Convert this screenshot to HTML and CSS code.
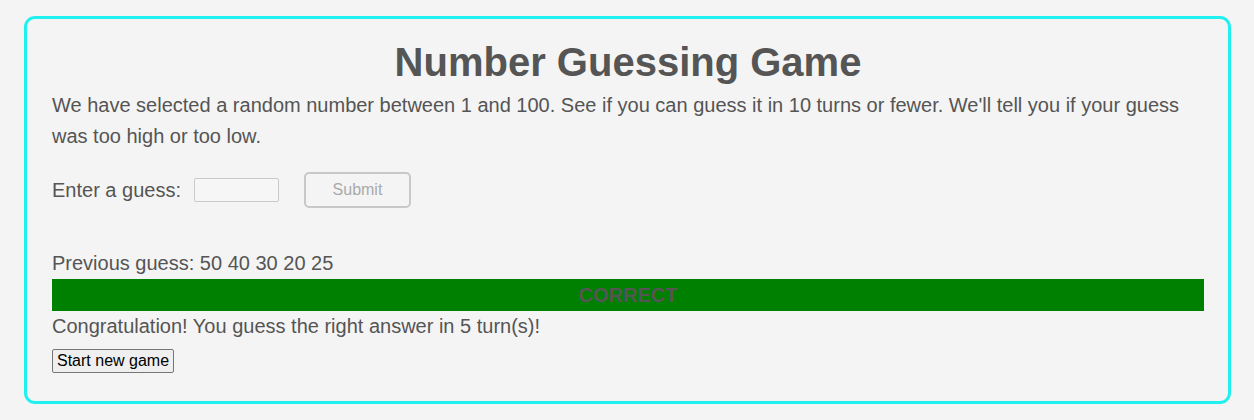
FILE: index.html
```html
<!DOCTYPE html>
<html lang="en">
<head>
<meta charset="utf-8">
<title>Number Guessing Game</title>
<link rel="stylesheet" href="styles.css">
</head>
<body>
<main class="game">
  <h1 class="title">Number Guessing Game</h1>
  <p class="intro">We have selected a random number between 1 and 100. See if you can guess it in 10 turns or fewer. We'll tell you if your guess was too high or too low.</p>
  <div class="form-row">
    <label class="label" for="guessField">Enter a guess:</label>
    <input class="guess-field" id="guessField" type="text" disabled>
    <button class="submit" type="button" disabled>Submit</button>
  </div>
  <div class="results">
    <p class="line">Previous guess: 50 40 30 20 25</p>
    <p class="status">CORRECT</p>
    <p class="line">Congratulation! You guess the right answer in 5 turn(s)!</p>
    <button class="restart" type="button">Start new game</button>
  </div>
</main>
</body>
</html>
```

FILE: styles.css
```css
html, body {
  background: #f4f4f4;
}
body {
  margin: 0;
  padding: 16px 23px 16px 24px;
  font-family: "Liberation Sans", Arial, sans-serif;
  color: #555555;
  font-size: 20px;
}
.game {
  border: 3px solid #20f0f0;
  border-radius: 11px;
  padding: 20px 24px 28px 25px;
}
.title {
  margin: 0 0 5px 0;
  font-size: 40px;
  line-height: 46px;
  font-weight: bold;
  text-align: center;
  color: #555555;
}
.intro {
  margin: 0;
  line-height: 31px;
}
.form-row {
  margin-top: 20px;
  display: flex;
  align-items: center;
  height: 36px;
}
.label {
  line-height: 31px;
}
.guess-field {
  margin-left: 13px;
  width: 85px;
  height: 24px;
  box-sizing: border-box;
  border: 1px solid #cacaca;
  border-radius: 2px;
  background: #f6f6f6;
  padding: 0;
}
.submit {
  margin-left: 25px;
  width: 107px;
  height: 36px;
  box-sizing: border-box;
  border: 2px solid #c8c8c8;
  border-radius: 5px;
  background: #f4f4f4;
  color: #a9a9a9;
  font-family: "Liberation Sans", Arial, sans-serif;
  font-size: 16px;
  padding: 0;
}
.results {
  margin-top: 40px;
}
.line {
  margin: 0;
  line-height: 31px;
}
.status {
  margin: 0;
  height: 32px;
  line-height: 32px;
  background: #008000;
  color: #555555;
  font-weight: bold;
  text-align: center;
}
.restart {
  display: block;
  margin-top: 7px;
  height: 24px;
  padding: 0 4px;
  border: 1px solid #767676;
  border-radius: 2px;
  background: #efefef;
  color: #000000;
  font-family: "Liberation Sans", Arial, sans-serif;
  font-size: 16px;
}
```
